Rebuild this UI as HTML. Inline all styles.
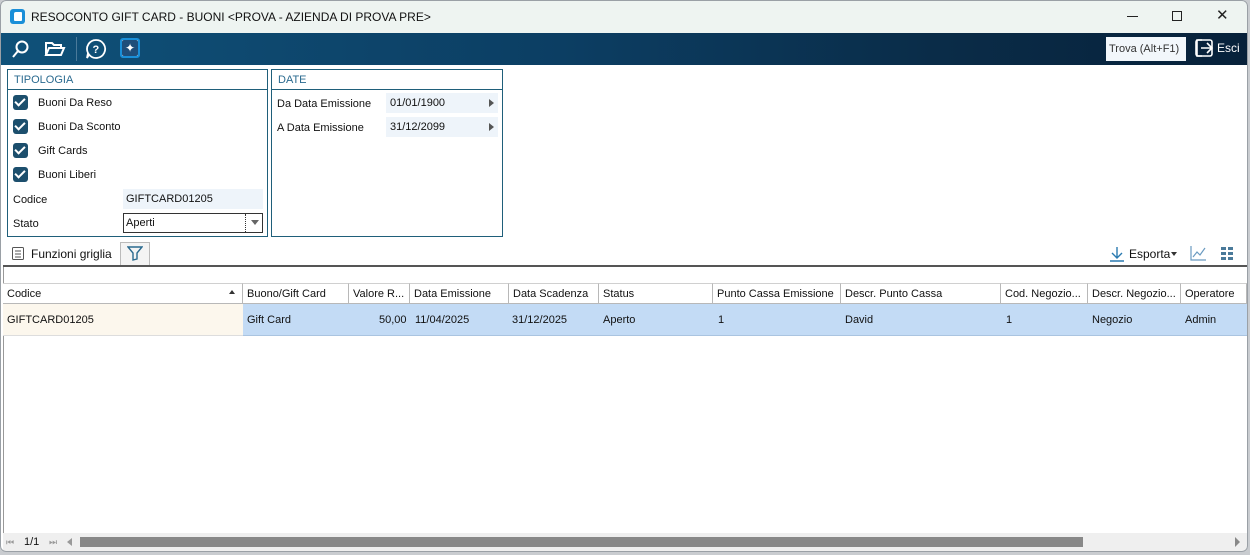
<!DOCTYPE html>
<html><head><meta charset="utf-8"><style>
*{box-sizing:border-box;margin:0;padding:0}
body{width:1250px;height:555px;overflow:hidden;background:#c9ccd0;font-family:"Liberation Sans",sans-serif;font-size:11px;color:#111}
#win{position:absolute;left:0;top:0;width:1248px;height:552px;background:#fff;border-radius:6px;overflow:hidden}
#frame{position:absolute;left:0;top:0;width:1248px;height:552px;border:1px solid #9aa0a6;border-radius:6px;pointer-events:none}
#title{position:absolute;left:0;top:0;width:100%;height:33px;background:#eef4f1;font-size:12px}
#tb{position:absolute;left:0;top:33px;width:100%;height:32px;background:linear-gradient(90deg,#0f5179 0%,#0c3e63 45%,#0a2c48 75%,#07213a 100%)}
.a{position:absolute;white-space:nowrap}
.box{position:absolute;border:1px solid #1f5f7a;background:#fff}
.bh{height:20px;border-bottom:1px solid #1f5f7a;color:#2a6a8f;padding:4px 0 0 6px;font-size:11px}
.cb{position:absolute;width:15px;height:15px;background:#1c4f6d;border-radius:3px}
.cb:after{content:"";position:absolute;left:4px;top:1px;width:4px;height:8px;border:solid #fff;border-width:0 2px 2px 0;transform:rotate(45deg)}
.hd{position:absolute;top:283px;height:21px;border-right:1px solid #b8b8b8;border-bottom:1px solid #b8b8b8;border-top:1px solid #d0d0d0;background:#fff;padding:4px 0 0 4px;overflow:hidden;white-space:nowrap}
.cl{position:absolute;top:304px;height:32px;background:#c3dbf5;padding:10px 0 0 4px;white-space:nowrap;border-bottom:1px solid #aac4e0}
</style></head><body><div id="win">
<div id="title">
 <div class="a" style="left:10px;top:9px;width:15px;height:15px;background:#1a8fd8;border-radius:3px"></div>
 <div class="a" style="left:14px;top:12px;width:8px;height:9px;background:#fff;border-radius:2px 1px 1px 1px"></div>
 <div class="a" style="left:31px;top:10px">RESOCONTO GIFT CARD - BUONI &lt;PROVA - AZIENDA DI PROVA PRE&gt;</div>
 <div class="a" style="left:1127px;top:16px;width:11px;height:1px;background:#222"></div>
 <div class="a" style="left:1172px;top:11px;width:10px;height:10px;border:1px solid #222"></div>
 <div class="a" style="left:1216px;top:6px;font-size:15px;color:#222">✕</div>
</div>
<div id="tb">
 <svg class="a" style="left:10px;top:6px" width="20" height="20" fill="none" stroke="#fff" stroke-width="2"><circle cx="12" cy="8" r="5.5"/><path d="M8 12L3 18"/></svg>
 <svg class="a" style="left:44px;top:7px" width="22" height="18" fill="none" stroke="#fff" stroke-width="2"><path d="M2 15V3h6l2 2h7v3M2 15l3-7h15l-3 7z"/></svg>
 <div class="a" style="left:76px;top:4px;width:1px;height:24px;background:#4a7a9a"></div>
 <svg class="a" style="left:85px;top:5px" width="22" height="22" fill="none" stroke="#fff" stroke-width="1.8"><path d="M11 2a9 9 0 1 1-7 14.5L2 20l1-5A9 9 0 0 1 11 2z"/><text x="7.5" y="15" fill="#fff" stroke="none" font-size="11" font-family="Liberation Sans" font-weight="bold">?</text></svg>
 <div class="a" style="left:120px;top:5px;width:20px;height:20px;background:#fff;border-radius:3px;border:2px solid #1a8fd8"></div>
 <div class="a" style="left:122px;top:7px;width:16px;height:16px;background:#1f4e7a;border-radius:2px;color:#fff;font-size:12px;text-align:center;line-height:16px">✦</div>
 <div class="a" style="left:1106px;top:4px;width:80px;height:24px;background:#f2f7fb;color:#333;padding:6px 0 0 3px;font-size:11px">Trova (Alt+F1)</div>
 <svg class="a" style="left:1194px;top:5px" width="20" height="20" fill="none" stroke="#fff" stroke-width="1.6"><path d="M8 2H3v16h5M7 10h11M13 5l5 5-5 5"/><rect x="2" y="2" width="16" height="16" rx="2"/></svg>
 <div class="a" style="left:1217px;top:8px;color:#fff;font-size:12px">Esci</div>
</div>

<div class="box" style="left:7px;top:69px;width:261px;height:168px">
 <div class="bh">TIPOLOGIA</div>
</div>
<div class="cb" style="left:13px;top:95px"></div><div class="a" style="left:38px;top:97px">Buoni Da Reso</div>
<div class="cb" style="left:13px;top:119px"></div><div class="a" style="left:38px;top:121px">Buoni Da Sconto</div>
<div class="cb" style="left:13px;top:143px"></div><div class="a" style="left:38px;top:145px">Gift Cards</div>
<div class="cb" style="left:13px;top:167px"></div><div class="a" style="left:38px;top:169px">Buoni Liberi</div>
<div class="a" style="left:13px;top:194px">Codice</div>
<div class="a" style="left:123px;top:189px;width:140px;height:20px;background:#eef4fa;padding:4px 0 0 3px">GIFTCARD01205</div>
<div class="a" style="left:13px;top:218px">Stato</div>
<div class="a" style="left:123px;top:213px;width:140px;height:20px;border:1px solid #333;background:#fff;padding:3px 0 0 2px">Aperti</div>
<div class="a" style="left:245px;top:214px;width:1px;height:18px;border-left:1px dotted #333"></div>
<div class="a" style="left:251px;top:220px;width:0;height:0;border:4px solid transparent;border-top:5px solid #666"></div>

<div class="box" style="left:271px;top:69px;width:232px;height:168px">
 <div class="bh">DATE</div>
</div>
<div class="a" style="left:277px;top:98px">Da Data Emissione</div>
<div class="a" style="left:386px;top:93px;width:112px;height:20px;background:#eef4fa;padding:4px 0 0 4px">01/01/1900</div>
<div class="a" style="left:489px;top:99px;border:4px solid transparent;border-left:5px solid #555"></div>
<div class="a" style="left:277px;top:122px">A Data Emissione</div>
<div class="a" style="left:386px;top:117px;width:112px;height:20px;background:#eef4fa;padding:4px 0 0 4px">31/12/2099</div>
<div class="a" style="left:489px;top:123px;border:4px solid transparent;border-left:5px solid #555"></div>

<svg class="a" style="left:11px;top:246px" width="14" height="15" fill="none" stroke="#555"><rect x="1.5" y="1.5" width="11" height="12" rx="1"/><path d="M4 5h6M4 8h6M4 11h6"/></svg>
<div class="a" style="left:31px;top:247px;font-size:12px">Funzioni griglia</div>
<div class="a" style="left:120px;top:242px;width:30px;height:23px;border:1px solid #bbb;border-bottom:none;background:#f4f4f4"></div>
<svg class="a" style="left:127px;top:246px" width="16" height="15" fill="none" stroke="#2a6a8f" stroke-width="1.4"><path d="M1 1h14L10 7v6l-4 1V7z"/></svg>
<div class="a" style="left:3px;top:265px;width:1244px;height:2px;background:#555"></div>
<div class="a" style="left:3px;top:267px;width:1px;height:266px;background:#999"></div>

<svg class="a" style="left:1109px;top:246px" width="16" height="16" fill="none" stroke="#2a7ab0" stroke-width="1.4"><path d="M8 1v10M3 7l5 5 5-5M1 15h14"/></svg>
<div class="a" style="left:1129px;top:247px;font-size:12px">Esporta</div>
<div class="a" style="left:1171px;top:252px;border:3px solid transparent;border-top:4px solid #333"></div>
<svg class="a" style="left:1190px;top:245px" width="17" height="16" fill="none" stroke="#6a9ac0" stroke-width="1.2"><path d="M1 1v14h15M3 12l4-5 3 3 5-7"/></svg>
<svg class="a" style="left:1221px;top:247px" width="14" height="13" fill="#4a7a9a"><rect x="0" y="0" width="5" height="3"/><rect x="7" y="0" width="5" height="3"/><rect x="0" y="5" width="5" height="3"/><rect x="7" y="5" width="5" height="3"/><rect x="0" y="10" width="5" height="3"/><rect x="7" y="10" width="5" height="3"/></svg>

<div class="hd" style="left:3px;width:240px">Codice</div>
<div class="a" style="left:229px;top:290px;border:3px solid transparent;border-bottom:4px solid #333;border-top:0"></div>
<div class="hd" style="left:243px;width:106px">Buono/Gift Card</div>
<div class="hd" style="left:349px;width:61px">Valore R...</div>
<div class="hd" style="left:410px;width:99px">Data Emissione</div>
<div class="hd" style="left:509px;width:90px">Data Scadenza</div>
<div class="hd" style="left:599px;width:114px">Status</div>
<div class="hd" style="left:713px;width:128px">Punto Cassa Emissione</div>
<div class="hd" style="left:841px;width:160px">Descr. Punto Cassa</div>
<div class="hd" style="left:1001px;width:87px">Cod. Negozio...</div>
<div class="hd" style="left:1088px;width:93px">Descr. Negozio...</div>
<div class="hd" style="left:1181px;width:66px">Operatore</div>

<div class="cl" style="left:3px;width:240px;background:#fcf7ed;border-bottom-color:#ddd">GIFTCARD01205</div>
<div class="cl" style="left:243px;width:1004px;padding:0"></div>
<div class="a" style="left:247px;top:314px">Gift Card</div>
<div class="a" style="left:379px;top:314px">50,00</div>
<div class="a" style="left:415px;top:314px">11/04/2025</div>
<div class="a" style="left:512px;top:314px">31/12/2025</div>
<div class="a" style="left:603px;top:314px">Aperto</div>
<div class="a" style="left:718px;top:314px">1</div>
<div class="a" style="left:845px;top:314px">David</div>
<div class="a" style="left:1006px;top:314px">1</div>
<div class="a" style="left:1092px;top:314px">Negozio</div>
<div class="a" style="left:1185px;top:314px">Admin</div>

<div class="a" style="left:3px;top:533px;width:1244px;height:18px;background:#efefef"></div>
<div class="a" style="left:6px;top:537px;font-size:9px;color:#999">⏮</div>
<div class="a" style="left:24px;top:536px">1/1</div>
<div class="a" style="left:49px;top:537px;font-size:9px;color:#999">⏭</div>
<div class="a" style="left:67px;top:538px;border:4px solid transparent;border-right:5px solid #999;border-left:0"></div>
<div class="a" style="left:80px;top:537px;width:1003px;height:10px;background:#888"></div>
<div class="a" style="left:1235px;top:537px;border:5px solid transparent;border-left:5px solid #888;border-right:0"></div>
</div><div id="frame"></div></body></html>
